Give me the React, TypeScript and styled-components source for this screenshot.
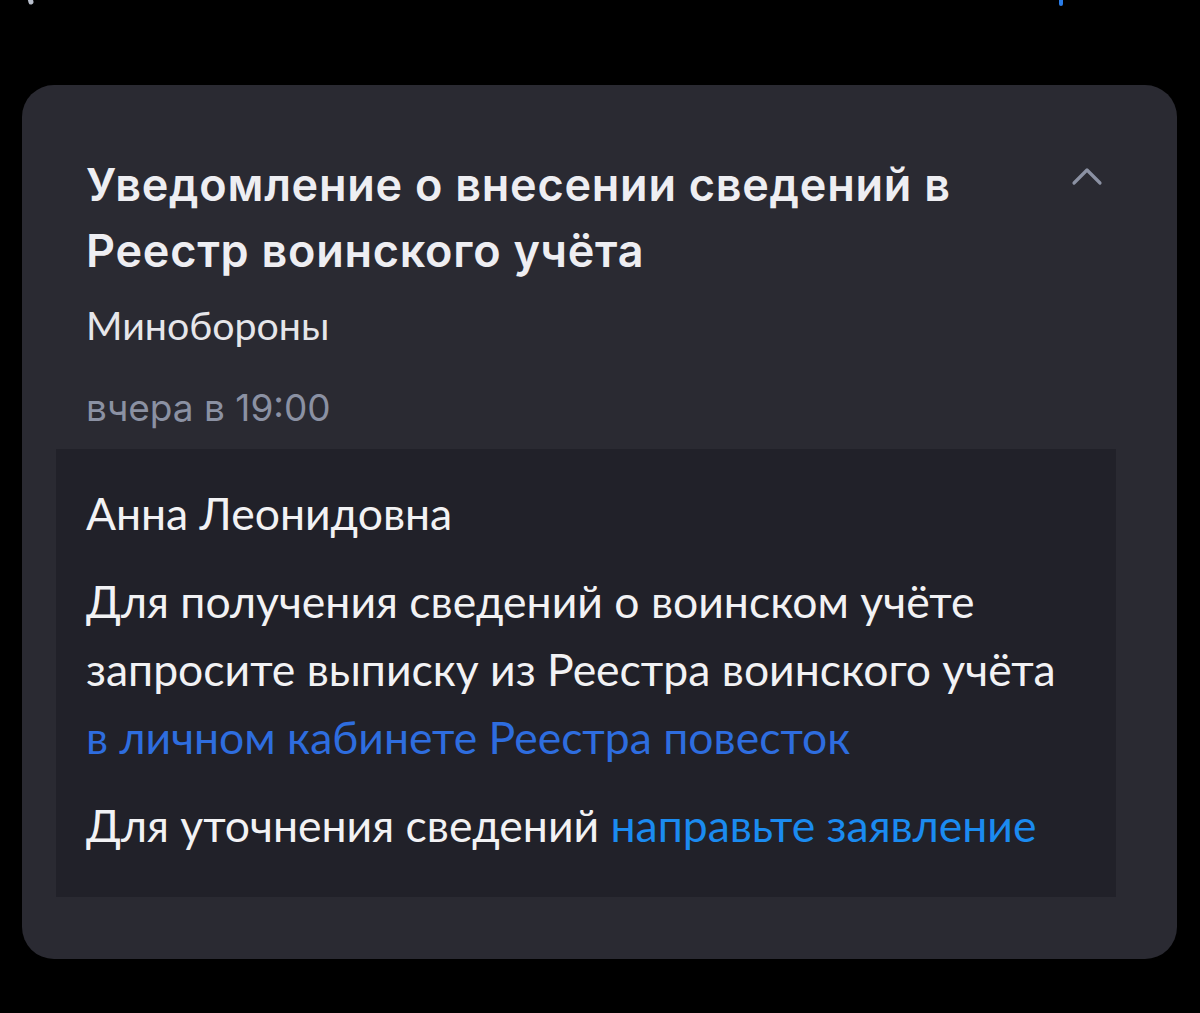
import React from "react";
import styled, { createGlobalStyle } from "styled-components";

const GlobalStyle = createGlobalStyle`
  html, body {
    margin: 0;
    padding: 0;
    background: #000;
  }
  body {
    font-family: Lato, "Noto Sans", sans-serif;
    -webkit-font-smoothing: antialiased;
  }
`;

const Screen = styled.div`
  width: 1200px;
  height: 1013px;
  background: #000;
  overflow: hidden;
`;

const TopBar = styled.div`
  height: 6px;
  overflow: hidden;
  display: flex;
  align-items: flex-end;
  justify-content: space-between;
  padding: 0 136px 0 22px;
`;

const Card = styled.section`
  margin: 79px 23px 0 22px;
  background: #2a2a32;
  border-radius: 32px;
  padding: 67px 61px 62px 64px;
`;

const Head = styled.div`
  display: flex;
  align-items: flex-start;
  justify-content: space-between;
`;

const Title = styled.h1`
  margin: 0;
  font-family: Inter, "Noto Sans", sans-serif;
  font-weight: 600;
  font-size: 45px;
  line-height: 66px;
  letter-spacing: 0.75px;
  color: #eeeef2;
`;

const Toggle = styled.button`
  border: 0;
  background: none;
  padding: 0;
  margin: 12px 12px 0 0;
  width: 34px;
  height: 24px;
  display: flex;
  align-items: center;
  justify-content: center;
`;

const Sender = styled.div`
  margin-top: 19px;
  font-size: 39.3px;
  line-height: 44px;
  color: #e6e6ea;
`;

const Time = styled.div`
  margin-top: 39px;
  font-family: Inter, "Noto Sans", sans-serif;
  font-size: 37px;
  line-height: 44px;
  color: #8b91a3;
`;

const Body = styled.div`
  margin: 19px 0 0 -30px;
  background: #212129;
  padding: 30px 30px 38px 30px;
  display: flex;
  flex-direction: column;
  gap: 20px;
`;

const Para = styled.p`
  margin: 0;
  font-size: 44.5px;
  line-height: 68px;
  color: #f2f2f4;
`;

const Link = styled.a<{ $tone?: "deep" | "light" }>`
  color: ${(p) => (p.$tone === "light" ? "#1b8bf0" : "#2e6ddf")};
  text-decoration: none;
`;

const ChevronUp = () => (
  <svg width="32" height="20" viewBox="0 0 32 20" fill="none">
    <path
      d="M3 17 L16 4 L29 17"
      stroke="#8b91a3"
      strokeWidth="3.2"
      strokeLinecap="round"
      strokeLinejoin="round"
    />
  </svg>
);

export default function App() {
  return (
    <Screen>
      <GlobalStyle />
      <TopBar>
        <svg width="14" height="30" viewBox="0 0 14 30">
          <path d="M2 0 L9 26" stroke="#b9bfcc" strokeWidth="5" strokeLinecap="round" />
        </svg>
        <svg width="6" height="20" viewBox="0 0 6 20">
          <rect x="1" y="0" width="4" height="20" rx="2" fill="#2a7de8" />
        </svg>
      </TopBar>
      <Card>
        <Head>
          <Title>
            Уведомление о внесении сведений в
            <br />
            Реестр воинского учёта
          </Title>
          <Toggle aria-label="Свернуть">
            <ChevronUp />
          </Toggle>
        </Head>
        <Sender>Минобороны</Sender>
        <Time>вчера в 19:00</Time>
        <Body>
          <Para>Анна Леонидовна</Para>
          <Para>
            Для получения сведений о воинском учёте
            <br />
            запросите выписку из Реестра воинского учёта
            <br />
            <Link href="#">в личном кабинете Реестра повесток</Link>
          </Para>
          <Para>
            Для уточнения сведений <Link $tone="light" href="#">направьте заявление</Link>
          </Para>
        </Body>
      </Card>
    </Screen>
  );
}
